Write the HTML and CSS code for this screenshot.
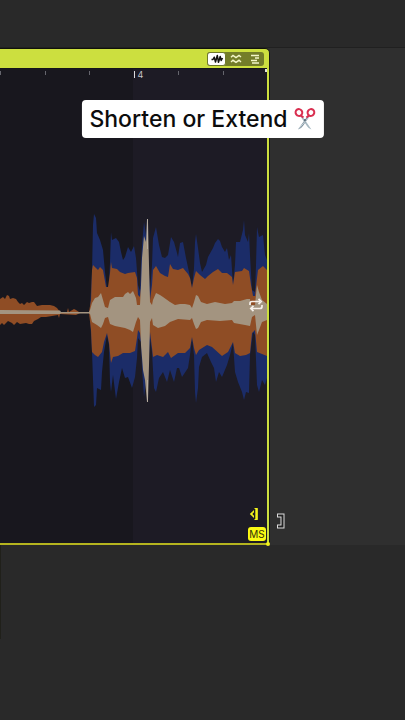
FILE: index.html
```
<!DOCTYPE html>
<html lang="en">
<head>
    <meta charset="UTF-8">
    <meta name="viewport" content="width=device-width, initial-scale=1.0">
    <title>Shorten or Extend</title>
    <link rel="stylesheet" href="styles.css">
</head>
<body>
    <main class="arrangement">
        <div class="lane-above"></div>

        <section class="lane">
            <div class="clip">
                <div class="clip-header">
                    <div class="view-switch">
                        <button class="view active" aria-label="Waveform">
                            <svg width="14" height="10" viewBox="0 0 14 10"><path d="M1.500 5.500H3L4.300 3.200 5.500 8 7.300 1.500 8.500 8.300 10.200 2.500 11.200 6.500 12.500 4" fill="none" stroke="#111" stroke-width="1.500" stroke-linejoin="round"/></svg>
                        </button>
                        <button class="view" aria-label="Warp">
                            <svg width="12" height="10" viewBox="0 0 12 10"><path d="M1 3.200l2-1.700 3 2 3-2 2 1.500M1 8l2-1.700 3 2 3-2L11 8" fill="none" stroke="#f3f6c8" stroke-width="1.500"/></svg>
                        </button>
                        <button class="view" aria-label="Notes">
                            <svg width="12" height="10" viewBox="0 0 12 10"><path d="M2 1.500h8M6 4h4M2 6.500h6M3 9h7" fill="none" stroke="#f3f6c8" stroke-width="1.300"/></svg>
                        </button>
                    </div>
                </div>

                <div class="clip-body">
                    <div class="ruler">
                        <span></span>
                        <span></span>
                        <span></span>
                        <span class="bar">4</span>
                        <span></span>
                        <span></span>
                    </div>

                    <div class="wave-area">
                        <svg class="wave" viewBox="0 205 267 210" preserveAspectRatio="none" aria-hidden="true">
                            <!-- low band -->
                            <path fill="#1b2c68" d="M90 308L92 272 93 225 94 214 96 218 97 233 100 240 103 250 105 272 107 288 109 285 110 262 111 232 112 240 116 238 119 242 121 252 123 260 125 257 128 247 131 252 134 246 136 258 138 285 140 291 141 265 142 245 144 222 146 235 147 218 148 255 150 292 152 265 153 238 156 227 159 245 162 257 165 258 168 255 171 237 174 242 177 253 178 257 180 243 183 242 186 258 189 272 192 288 194 268 195 242 196 234 198 248 200 263 202 272 206 265 208 257 213 248 215 243 218 239 220 241 222 247 225 252 227 248 229 260 231 255 233 284 235 265 236 242 240 242 243 230 244 220 245 235 248 242 249 233 250 255 252 290 255 292 256 265 257 227 259 237 263 235 265 255 267 260V378L265 385 262 380 259 392 257 385 255 335 253 332 250 355 249 393 246 392 244 400 242 392 238 382 235 372 233 343 230 355 227 365 222 377 219 372 216 382 214 368 211 362 207 353 202 357 199 367 198 388 196 403 195 392 194 355 192 338 190 355 188 368 182 377 179 368 177 368 174 382 170 370 167 382 163 372 159 378 156 392 154 388 152 352 150 338 148 372 147 402 146 382 144 397 142 368 141 342 138 338 137 358 135 377 132 388 128 377 125 378 122 368 119 382 116 399 113 375 111 392 110 382 109 345 107 335 104 352 102 372 101 390 97 388 96 405 94 407 92 352 90 318z"/>
                            <!-- mid band -->
                            <path fill="#8f4d25" d="M0 299L3 297 5 299 7 295 9 296 10 299 13 298 16 299 18 302 20 304 22 303 24 305 27 302 29 303 32 302 34 302 37 306 42 305 50 305 54 306 57 308 60 312 67 312 68 308 69 312 74 309 76 310 79 312 89 312 91 300 92 270 93 265 96 268 98 270 100 267 103 270 106 287 108 287 110 273 111 262 112 268 117 269 120 272 125 274 128 273 135 272 137 278 138 295 140 297 142 280 148 280 150 300 152 285 153 270 156 266 160 273 165 276 168 277 170 264 173 269 178 270 183 268 188 274 190 278 192 288 194 278 196 271 200 275 205 279 208 276 213 272 218 269 222 273 227 273 232 277 233 285 235 272 242 271 244 268 249 271 251 285 253 296 255 296 257 278 258 270 263 266 267 270V356L257 352 255 330 252 333 250 353 246 355 240 356 235 353 233 342 228 352 222 356 212 347 207 345 199 350 196 355 194 348 192 337 190 348 185 353 178 353 171 358 168 352 163 357 157 355 153 357 152 348 150 332 148 350 142 350 140 333 138 330 137 338 135 351 130 353 123 353 118 356 113 357 111 363 109 343 107 333 104 342 102 352 98 357 95 355 92 352 91 330 89 313 80 313 76 315 60 314 59 318 58 315 46 317 41 317 38 319 34 321 32 324 29 324 26 323 20 324 17 322 14 325 12 323 8 321 4 325 2 323 0 325z"/>
                            <!-- high band -->
                            <path fill="#a39480" d="M0 310L60 310.500 61 312H89L90 310 92 303 95 298 98 297 101 293 103 300 105 307 108 308 110 300 115 297 123 297 125 294 128 292 130 294 133 291 136 298 137 305 140 305 141 285 142 258 144 236 146 242 147 220 148 222 149 265 150 302 152 305 153 300 156 293 160 295 163 297 170 302 175 305 180 304 185 304 190 305 192 308 194 302 196 295 198 296 201 302 207 304 215 302 225 304 232 303 234 301 240 301 247 299 250 299 251 305 255 305 257 285 259 292 262 300 267 304V320L262 322 259 330 257 335 255 315 252 317 250 326 245 325 234 323 232 320 220 321 207 320 201 322 198 328 196 329 194 324 192 318 190 320 178 319 170 322 165 326 158 328 153 325 152 318 150 322 149 365 148 400 147 402 145 380 143 370 141 345 140 320 138 317 136 322 133 332 130 330 125 328 115 326 110 324 108 317 105 318 103 324 101 328 97 325 92 322 90 314 89 313.500H61L60 314 0 314z"/>
                            <path fill="none" stroke="#b8aea0" d="M147.500 219v30M147.500 380v22"/>
                        </svg>
                        <button class="loop" aria-label="Loop">
                            <svg width="16" height="14" viewBox="0 0 16 14"><path d="M2 7V5.500Q2 3.500 4 3.500h8M10.500.8L13.200 3.500 10.500 6.200M14 7v1.500q0 2-2 2H4M5.500 7.800L2.800 10.500l2.700 2.700" fill="none" stroke="#f5f0ea" stroke-width="1.700"/></svg>
                        </button>
                    </div>

                    <div class="clip-tools">
                        <button class="trim" aria-label="Trim">
                            <svg width="10" height="14" viewBox="0 0 10 14"><path d="M5 3L.8 7 5 11V8.200H3.800V5.800H5z" fill="#f4f41c"/><path d="M5.500 1.500H8v11H5.500" fill="none" stroke="#f4f41c" stroke-width="1"/><path d="M7.500 1v12" stroke="#f4f41c" stroke-width="2.400"/></svg>
                        </button>
                        <button class="ms">MS</button>
                    </div>
                </div>
                <span class="corner"></span>
            </div>

            <div class="lane-rest">
                <!-- right edge drag cursor -->
                <svg width="9" height="16" viewBox="0 0 9 16"><path d="M1 2.500H6.500v11H1" fill="none" stroke="#ddd" stroke-width="4"/><path d="M2 2.500H6.500v11H2" fill="none" stroke="#222" stroke-width="2"/></svg>
            </div>
        </section>

        <div class="lane-below"></div>
    </main>

    <div class="caption">
        <h1>Shorten or Extend</h1>
        <svg width="22" height="24" viewBox="0 0 22 24">
            <path d="M5.500 8L8 8.500l9.500 14q-2.700-.5-4.500-3.500z" fill="#a9bac3"/>
            <path d="M16.500 8L14 8.500 4 22.500q3-.5 5-3.500z" fill="#81939f"/>
            <path d="M16 9L5 21.500" stroke="#c5d3da" stroke-width="1"/>
            <circle cx="11" cy="13" r="1" fill="#536570"/>
            <ellipse cx="5" cy="5.500" rx="3.300" ry="3.500" transform="rotate(-35 5 5.500)" fill="none" stroke="#d92f50" stroke-width="2"/>
            <ellipse cx="17" cy="5.500" rx="3.300" ry="3.500" transform="rotate(35 17 5.500)" fill="none" stroke="#d92f50" stroke-width="2"/>
            <path d="M7 8.500l2.500 2M15 8.500l-2.500 2" stroke="#d92f50" stroke-width="2"/>
        </svg>
    </div>
</body>
</html>
```
FILE: styles.css
```
* {
    box-sizing: border-box;
}
body {
    margin: 0;
    background-color: #292929;
    font-family: Inter, "Liberation Sans", sans-serif;
}
button {
    margin: 0;
    padding: 0;
    border: none;
    background: none;
    font-family: inherit;
    cursor: pointer;
}
svg {
    display: block;
}
.arrangement {
    display: flex;
    flex-direction: column;
    min-height: 100vh;
}
.lane-above {
    height: 48px;
    border-bottom: 1px solid #202020;
}
.lane {
    display: grid;
    grid-template-columns: 2fr 1fr;
    background-color: #2f2f2f;
}
.lane-below {
    flex: 1;
    background: linear-gradient(#20201a, #20201a) no-repeat 0 0 / 1px 94px;
}
.lane-rest {
    display: flex;
    align-items: flex-end;
    padding: 0 0 16px 6px;
}

/* clip */
.clip {
    position: relative;
    display: flex;
    flex-direction: column;
    border-top: 1px solid #11120a;
    border-right: 1px solid #161616;
    border-radius: 0 5px 0 0;
    background-color: #ccdf3f;
    padding-right: 2px;
}
.clip-header {
    display: flex;
    justify-content: flex-end;
    padding: 3px 3px 2px;
}
.view-switch {
    display: flex;
    border-radius: 3px;
    background-color: #737d29;
}
.view {
    display: flex;
    align-items: center;
    justify-content: center;
    width: 19px;
    height: 14px;
}
.view.active {
    border: 1px solid #6f792a;
    border-radius: 3px;
    background-color: #fff;
}
.clip-body {
    display: flex;
    flex-direction: column;
    border-top: 1px solid #15151a;
    border-bottom: 2px solid #b5b41f;
    background: linear-gradient(90deg, #18171e 50%, #1d1b25 50%);
}
.ruler {
    display: grid;
    grid-template-columns: repeat(6, 1fr);
    height: 136px;
    padding-top: 2px;
    background: linear-gradient(#e4e6d8, #e4e6d8) no-repeat 100% 0 / 2px 3px;
}
.ruler span {
    height: 4px;
    border-left: 1px solid #65656d;
}
.ruler .bar {
    height: 7px;
    padding-left: 3px;
    border-color: #dcdcdf;
    color: #c4c4c9;
    font-size: 9px;
    line-height: 7px;
}
.wave-area {
    position: relative;
}
.wave {
    width: 100%;
    height: 210px;
}
.loop {
    position: absolute;
    top: 93px;
    right: 3px;
}
.clip-tools {
    display: flex;
    flex-direction: column;
    align-items: flex-end;
    gap: 6px;
    padding: 92px 1px 2px 0;
}
.trim {
    padding-right: 7px;
}
.ms {
    width: 18px;
    height: 14px;
    border-radius: 3px;
    background-color: #fafa14;
    color: #33330a;
    font-size: 10px;
    line-height: 14px;
}
.corner {
    position: absolute;
    right: -1px;
    bottom: -1px;
    width: 4px;
    height: 4px;
    border-radius: 50%;
    background-color: #f4f41c;
}

/* caption over the arrangement */
.caption {
    position: absolute;
    top: 100px;
    left: 50%;
    transform: translateX(-50%);
    display: flex;
    align-items: center;
    gap: 6px;
    height: 38px;
    padding: 0 8px;
    border-radius: 4px;
    background-color: #fff;
    white-space: nowrap;
}
.caption h1 {
    margin: 0;
    color: #0c0c0c;
    font-size: 23px;
    font-weight: 500;
    line-height: 38px;
}
```
